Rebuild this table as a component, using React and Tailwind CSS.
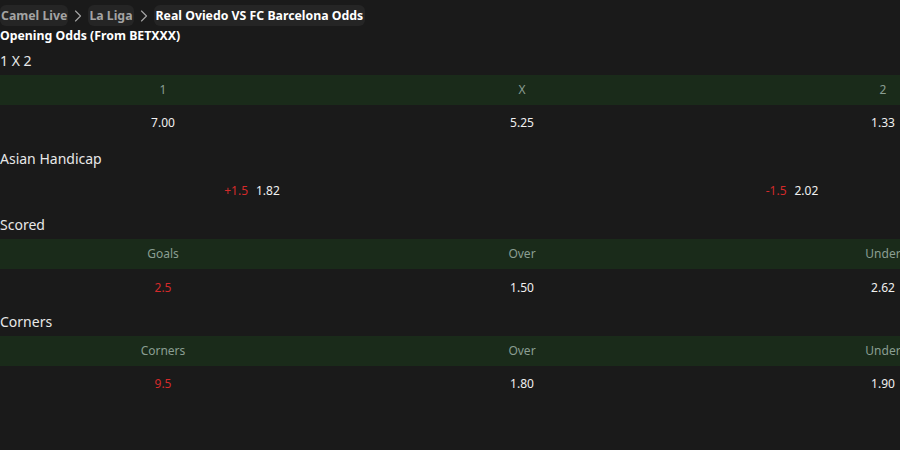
import { ChevronRight } from "lucide-react";

const crumbs = ["Camel Live", "La Liga"];

const markets = [
  {
    title: "1 X 2",
    head: ["1", "X", "2"],
    row: [
      { v: "7.00" },
      { v: "5.25" },
      { v: "1.33" },
    ],
  },
  {
    title: "Scored",
    head: ["Goals", "Over", "Under"],
    row: [{ v: "2.5", red: true }, { v: "1.50" }, { v: "2.62" }],
    tall: true,
  },
  {
    title: "Corners",
    head: ["Corners", "Over", "Under"],
    row: [{ v: "9.5", red: true }, { v: "1.80" }, { v: "1.90" }],
  },
];

const cols = "grid grid-cols-[326px_392px_330px] w-[1048px]";

const Market = ({ m }) => (
  <section>
    <h3 className="h-[30px] flex items-center text-[14px] text-[#e8e8e8]">{m.title}</h3>
    <div className={`${cols} h-[30px] bg-[#1a2b1a] items-center text-center text-[12px] text-[#8a9e92]`}>
      {m.head.map((h) => (
        <span key={h}>{h}</span>
      ))}
    </div>
    <div className={`${cols} ${m.tall ? "h-[37px]" : "h-[36px]"} items-center text-center text-[12px]`}>
      {m.row.map((c, i) => (
        <span key={i} className={c.red ? "text-[#d42a2a]" : "text-[#f0f0f0]"}>
          {c.v}
        </span>
      ))}
    </div>
  </section>
);

export default function App() {
  return (
    <div className="w-[900px] h-[450px] overflow-hidden bg-[#1a1a1a] font-['Noto_Sans',sans-serif]">
      <nav className="flex items-center h-[30px] pt-[1px] text-[12.3px] font-bold">
        {crumbs.map((c) => (
          <div key={c} className="flex items-center">
            <span className="px-[1px] h-[21px] leading-[21px] rounded-md bg-[#252525] text-[#a3a3a3]">{c}</span>
            <ChevronRight size={20} strokeWidth={1.4} className="mx-[0px] text-[#a3a3a3]" />
          </div>
        ))}
        <span className="px-[2px] h-[21px] leading-[21px] rounded-md bg-[#252525] text-white">
          Real Oviedo VS FC Barcelona Odds
        </span>
      </nav>
      <h2 className="text-[12.3px] font-bold text-white leading-[10px] mt-[1px] -mb-[1px]">Opening Odds (From BETXXX)</h2>

      <div className="mt-[5px]">
        <Market m={markets[0]} />
        <section>
          <h3 className="h-[34px] flex items-center text-[14px] text-[#e8e8e8]">Asian Handicap</h3>
          <div className="grid grid-cols-[504px_576px] h-[34px] pb-[2px] items-center text-center text-[12px]">
            <span><span className="text-[#d42a2a]">+1.5</span><span className="ml-[8px] text-[#f0f0f0]">1.82</span></span>
            <span><span className="text-[#d42a2a]">-1.5</span><span className="ml-[8px] text-[#f0f0f0]">2.02</span></span>
          </div>
        </section>
        <Market m={markets[1]} />
        <Market m={markets[2]} />
      </div>
    </div>
  );
}
